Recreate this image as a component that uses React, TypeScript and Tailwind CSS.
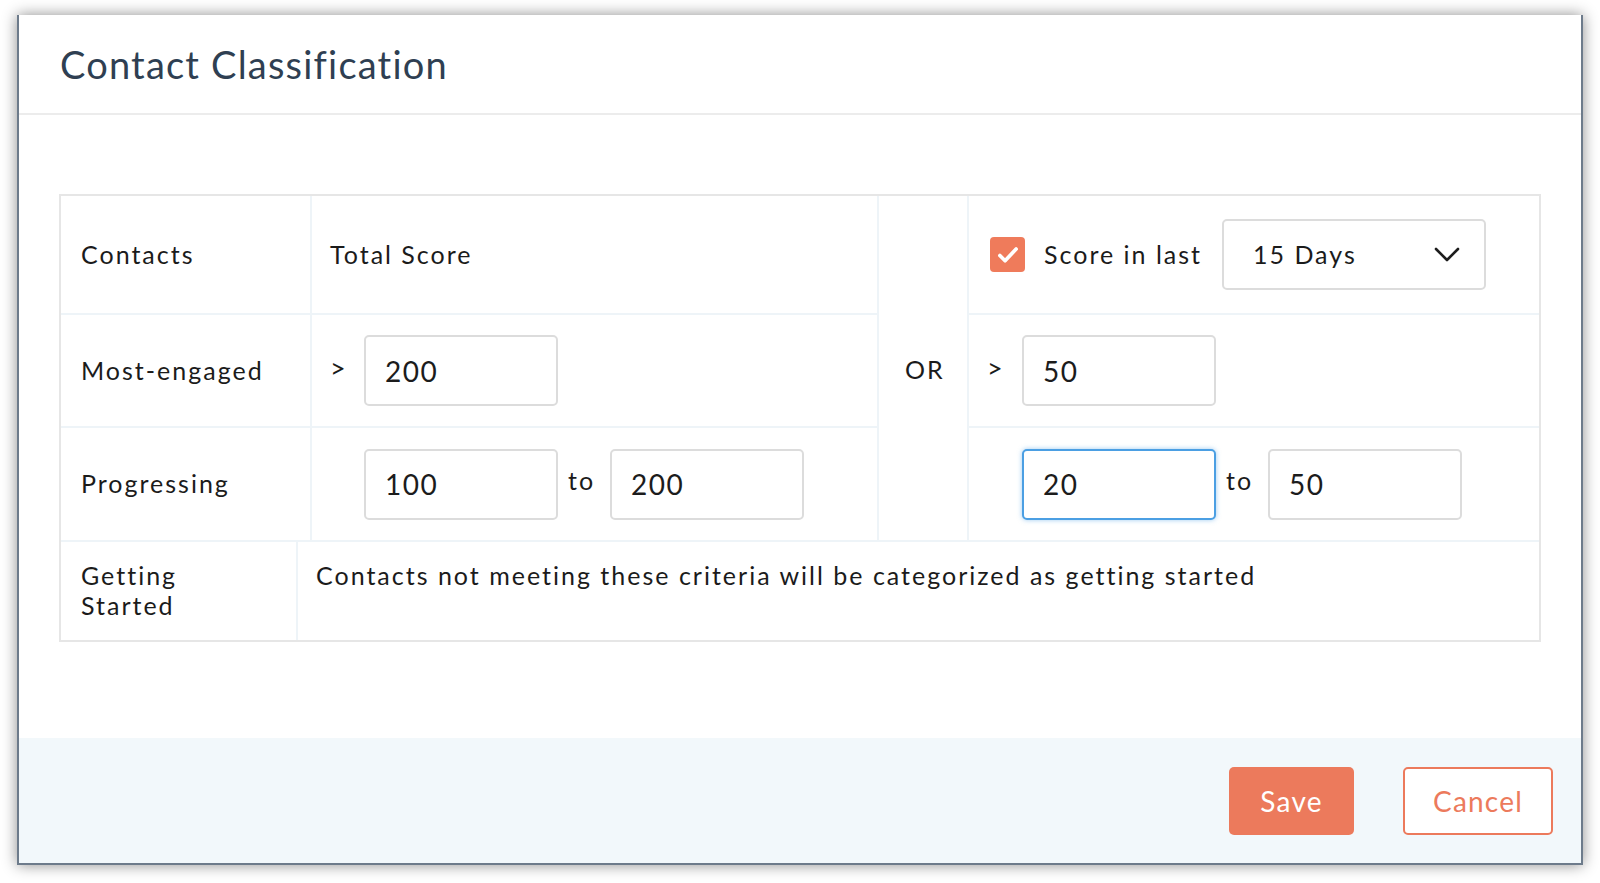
import { useState } from "react";

const font = { fontFamily: "Lato, 'Open Sans', sans-serif" };

function NumBox({ value, focused = false }: { value: string; focused?: boolean }) {
  return (
    <div
      className={`flex h-[71px] w-[194px] items-center rounded-[5px] bg-white pl-[19px] text-[28px] tracking-[1.5px] text-[#1c1c1c] ${
        focused
          ? "border-2 border-[#4b9fe3] shadow-[0_0_5px_rgba(75,159,227,0.55)]"
          : "border-2 border-[#dcdcdc]"
      }`}
    >
      {value}
    </div>
  );
}

export default function App() {
  const [checked, setChecked] = useState(true);

  return (
    <div className="min-h-screen bg-white pl-[17px] pt-[15px]" style={font}>
      {/* 모달 창 */}
      <div className="flex h-[850px] w-[1566px] flex-col border-x-2 border-b-2 border-[#6d7b8b] bg-white shadow-[0_0_14px_rgba(0,0,0,0.45)]">
        {/* 헤더 */}
        <div className="flex h-[100px] items-center border-b-2 border-[#ececec] pl-[41px]">
          <h1 className="text-[38px] tracking-[1.2px] text-[#2f3f52]">Contact Classification</h1>
        </div>

        {/* 본문 */}
        <div className="flex-1 px-[40px] pt-[79px] text-[25px] tracking-[2px] text-[#1b1b1b]">
          <div className="border-2 border-[#e6e6e6]">
            <div className="grid grid-cols-[251px_567px_90px_570px] grid-rows-[119px_113px_112px]">
              {/* 1행 */}
              <div className="flex items-center border-b-2 border-r-2 border-[#eef4f8] pl-[20px]">Contacts</div>
              <div className="flex items-center border-b-2 border-r-2 border-[#eef4f8] pl-[18px]">Total Score</div>
              <div className="row-span-3 flex items-center border-r-2 border-[#eef4f8] pl-[26px] pt-[4px]">OR</div>
              <div className="flex items-center border-b-2 border-[#eef4f8] pl-[21px]">
                <button
                  onClick={() => setChecked((c) => !c)}
                  className={`flex h-[35px] w-[35px] items-center justify-center rounded-[4px] ${
                    checked ? "bg-[#ef7b5b]" : "border-2 border-[#cccccc] bg-white"
                  }`}
                >
                  {checked && (
                    <svg width="26" height="26" viewBox="0 0 24 24" fill="none">
                      <path d="M4.5 12.5l4.8 4.8L19.5 6.5" stroke="white" strokeWidth="3.4" strokeLinecap="round" strokeLinejoin="round" />
                    </svg>
                  )}
                </button>
                <span className="ml-[19px] mr-[20px]">Score in last</span>
                <div className="flex h-[71px] w-[264px] items-center justify-between rounded-[5px] border-2 border-[#dcdcdc] pl-[29px] pr-[24px]">
                  <span>15 Days</span>
                  <svg width="26" height="15" viewBox="0 0 26 15" fill="none">
                    <path d="M2 2l11 11L24 2" stroke="#1d1d1d" strokeWidth="2.6" strokeLinecap="round" strokeLinejoin="round" />
                  </svg>
                </div>
              </div>

              {/* 2행 */}
              <div className="flex items-center border-b-2 border-r-2 border-[#eef4f8] pl-[20px]">Most-engaged</div>
              <div className="flex items-center border-b-2 border-r-2 border-[#eef4f8] pl-[18px]">
                <span className="w-[34px] pb-[4px] text-[27px]">&gt;</span>
                <NumBox value="200" />
              </div>
              <div className="flex items-center border-b-2 border-[#eef4f8] pl-[18px]">
                <span className="w-[35px] pb-[4px] text-[27px]">&gt;</span>
                <NumBox value="50" />
              </div>

              {/* 3행 */}
              <div className="flex items-center border-r-2 border-[#eef4f8] pl-[20px]">Progressing</div>
              <div className="flex items-center border-r-2 border-[#eef4f8] pl-[52px]">
                <NumBox value="100" />
                <span className="w-[52px] pb-[6px] pl-[10px]">to</span>
                <NumBox value="200" />
              </div>
              <div className="flex items-center pl-[53px]">
                <NumBox value="20" focused />
                <span className="w-[52px] pb-[6px] pl-[10px]">to</span>
                <NumBox value="50" />
              </div>
            </div>

            {/* 마지막 행 */}
            <div className="flex h-[100px] border-t-2 border-[#eef4f8]">
              <div className="w-[237px] border-r-2 border-[#eef4f8] pl-[20px] pt-[18px] leading-[30px]">
                Getting
                <br />
                Started
              </div>
              <div className="pl-[18px] pt-[18px] leading-[30px]">
                Contacts not meeting these criteria will be categorized as getting started
              </div>
            </div>
          </div>
        </div>

        {/* 푸터 */}
        <div className="flex h-[125px] items-center justify-end gap-[49px] bg-[#f2f8fb] pr-[28px]">
          <button className="h-[68px] w-[125px] rounded-[5px] bg-[#ec7a5c] text-[28px] tracking-[1.2px] text-white">
            Save
          </button>
          <button className="h-[68px] w-[150px] rounded-[5px] border-2 border-[#ec7a5c] bg-white text-[28px] tracking-[1.2px] text-[#ec7a5c]">
            Cancel
          </button>
        </div>
      </div>
    </div>
  );
}
